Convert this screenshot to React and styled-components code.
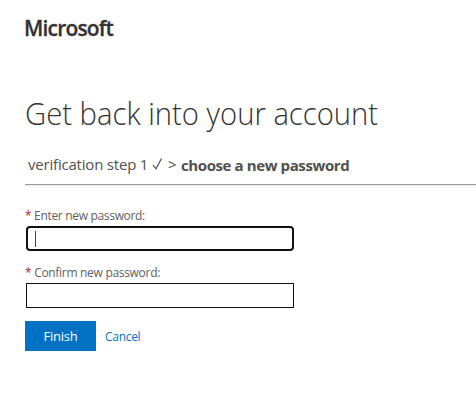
import React from 'react';
import styled, { createGlobalStyle } from 'styled-components';

const GlobalStyle = createGlobalStyle`
  * { box-sizing: border-box; }
  body {
    margin: 0;
    background: #fff;
    color: #505050;
    font-family: "Open Sans", "Noto Sans", sans-serif;
    overflow: hidden;
  }
`;

const Page = styled.main`
  display: flex;
  flex-direction: column;
  padding: 14px 0 0 25px;
  height: 419px;
`;

const Brand = styled.header`
  height: 28px;
  line-height: 28px;
  margin-left: -1px;
  font-size: 21px;
  font-weight: 600;
  letter-spacing: -0.82px;
  color: #333;
  -webkit-text-stroke: 0.3px #333;
`;

const Title = styled.h1`
  margin: 49px 0 0;
  height: 44px;
  line-height: 44px;
  font-size: 32px;
  font-weight: 300;
  transform: scaleX(0.914);
  transform-origin: left center;
  color: #333;
  white-space: nowrap;
`;

const Steps = styled.nav`
  display: flex;
  align-items: center;
  height: 48px;
  padding: 7px 0 0 3px;
  border-bottom: 1px solid #999;
  box-shadow: 0 1px 0 #eee;
  margin-top: 2px;
  font-size: 15px;
  line-height: 20px;
  white-space: nowrap;
`;

const Step = styled.span`
  width: ${(p) => p.$width}px;
  padding-top: ${(p) => (p.$current ? 2 : 0)}px;
  letter-spacing: ${(p) => p.$spacing || 0}px;
  font-weight: ${(p) => (p.$current ? 700 : 400)};
`;

const Check = styled.svg`
  width: 12px;
  height: 14px;
  margin-right: 4px;
`;

const Form = styled.form`
  display: flex;
  flex-direction: column;
  padding-top: 23px;
`;

const Label = styled.label`
  height: 16px;
  line-height: 16px;
  font-size: 12px;
  letter-spacing: ${(p) => p.$spacing}px;
  color: #606060;
  white-space: nowrap;
`;

const Required = styled.span`
  color: #a4262c;
`;

const Field = styled.div`
  display: flex;
  align-items: center;
  width: 268px;
  height: 25px;
  margin: 2px 0 14px 1px;
  padding-left: ${(p) => (p.$focused ? 7 : 8)}px;
  border: ${(p) => (p.$focused ? '2px' : '1px')} solid #101010;
  border-radius: ${(p) => (p.$focused ? '4px' : '0')};
`;

const Caret = styled.span`
  width: 1px;
  height: 16px;
  background: #444;
`;

const Actions = styled.div`
  display: flex;
  align-items: center;
  gap: 9px;
  margin-top: -1px;
`;

const Submit = styled.button`
  width: 71px;
  height: 30px;
  padding: 0;
  border: 0;
  background: #0072c6;
  color: #fff;
  font: 13px/30px "Open Sans", sans-serif;
  letter-spacing: -0.2px;
`;

const CancelLink = styled.a`
  padding-top: 2px;
  color: #0072c6;
  font-size: 12px;
  line-height: 20px;
  letter-spacing: -0.3px;
`;

export default function App() {
  return (
    <>
      <GlobalStyle />
      <Page>
        <Brand>Microsoft</Brand>
        <Title>Get back into your account</Title>
        <Steps>
          <Step $width={124} $spacing={-0.2}>verification step 1</Step>
          <Check viewBox="0 0 12 14" fill="none" stroke="#505050" strokeWidth="1.2">
            <path d="M1 8.2 4 11.8 9.5 1.5" />
          </Check>
          <Step $width={13}>&gt;</Step>
          <Step $current $width={180} $spacing={-0.4}>choose a new password</Step>
        </Steps>
        <Form>
          <Label $spacing={-0.32}>
            <Required>*</Required> Enter new password:
          </Label>
          <Field $focused>
            <Caret />
          </Field>
          <Label $spacing={-0.3}>
            <Required>*</Required> Confirm new password:
          </Label>
          <Field />
          <Actions>
            <Submit type="button">Finish</Submit>
            <CancelLink>Cancel</CancelLink>
          </Actions>
        </Form>
      </Page>
    </>
  );
}
